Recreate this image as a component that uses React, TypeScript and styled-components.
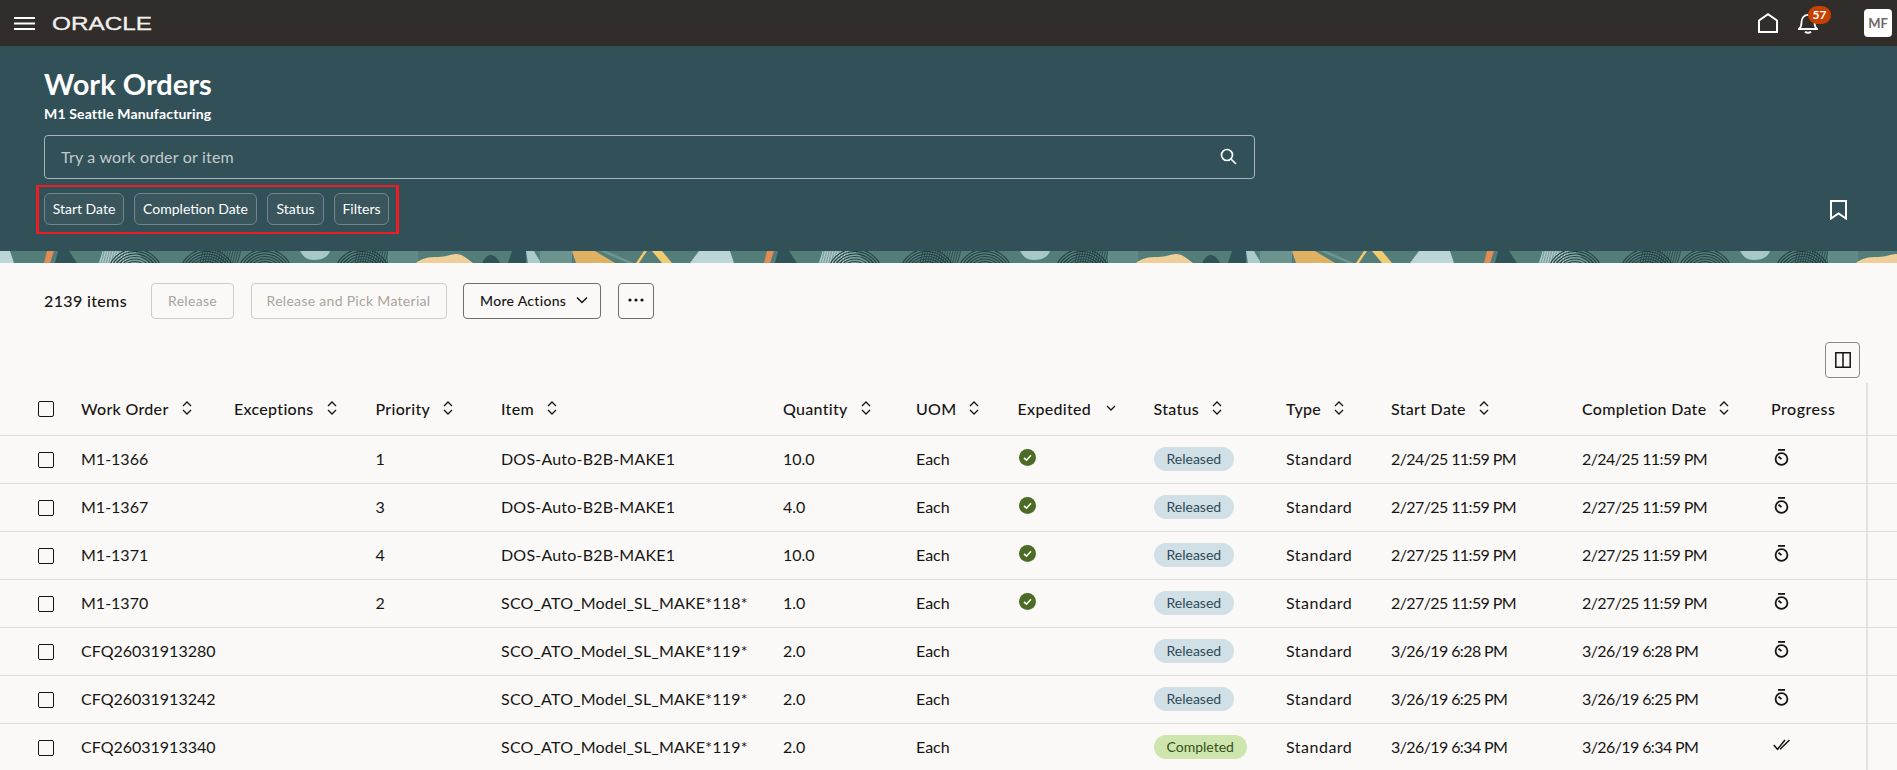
import React from 'react';
import styled, { createGlobalStyle } from 'styled-components';

const FONT = 'Lato, "Noto Sans", Arial, sans-serif';

const GlobalStyle = createGlobalStyle`
  html, body {
    margin: 0;
    height: 100%;
    overflow: hidden;
    background: #fbf9f8;
  }
  body {
    font-family: ${FONT};
    color: #161513;
  }
  * { box-sizing: border-box; }
`;

const GRID = '81px 153px 141.5px 125.5px 282px 133px 101.5px 136px 132.5px 105px 191px 189px 96px 1fr';

const TopBar = styled.header`
  height: 46px;
  background: #312d2a;
  display: flex;
  align-items: center;
  padding: 0 5px 0 14px;
`;

const TopActions = styled.div`
  margin-left: auto;
  display: flex;
  align-items: center;
`;

const IconSlot = styled.div`
  position: relative;
  display: flex;
  margin-right: ${(p: { $gap: number }) => p.$gap}px;
`;

const Badge = styled.span`
  position: absolute;
  left: 10px;
  top: -7px;
  width: 23px;
  height: 18px;
  border-radius: 9px;
  background: #c74100;
  color: #fff;
  font-size: 12px;
  font-weight: 700;
  line-height: 18px;
  text-align: center;
`;

const Avatar = styled.div`
  width: 28px;
  height: 28px;
  border-radius: 4px;
  background: #fff;
  color: #6f6a67;
  font-size: 13px;
  font-weight: 700;
  line-height: 28px;
  text-align: center;
`;

const Hero = styled.section`
  height: 205px;
  background: #325057;
  padding: 19px 50px 0 44px;
  color: #fff;
`;

const Title = styled.h1`
  margin: 0 0 1px;
  font-size: 29px;
  line-height: 38px;
  font-weight: 700;
`;

const Subtitle = styled.div`
  font-size: 14px;
  line-height: 20px;
  font-weight: 700;
  letter-spacing: 0.15px;
`;

const SearchBox = styled.div`
  width: 1211px;
  height: 44px;
  margin-top: 11px;
  padding: 0 17px 2px 16px;
  display: flex;
  align-items: center;
  justify-content: space-between;
  border: 1px solid #a5b5b8;
  border-radius: 4px;
  color: #c0cbcd;
  font-size: 16px;
  letter-spacing: 0.2px;
`;

const FilterRow = styled.div`
  display: flex;
  align-items: center;
  justify-content: space-between;
  margin-top: 6px;
`;

const FilterGroup = styled.div`
  display: flex;
  gap: 10px;
  margin-left: -8px;
  padding: 6px 7px 7px 5px;
  border: solid #ee1c25;
  border-width: 2px 3px;
`;

const Chip = styled.button<{ $width: number }>`
  width: ${(p) => p.$width}px;
  height: 32px;
  padding: 0 0 2px;
  border: 1px solid #6f878b;
  border-radius: 6px;
  background: #3a565c;
  color: #fff;
  font-family: ${FONT};
  font-size: 14px;
  white-space: nowrap;
`;

const BannerStrip = styled.svg`
  display: block;
  width: 100%;
  height: 12px;
`;

const Toolbar = styled.div`
  display: flex;
  align-items: center;
  height: 36px;
  margin-top: 20px;
  padding-left: 44px;
`;

const ItemCount = styled.div`
  width: 107px;
  padding-bottom: 2px;
  font-size: 16px;
  font-weight: 500;
  letter-spacing: 0.35px;
`;

const ActionButton = styled.button<{ $width: number; $disabled?: boolean }>`
  width: ${(p) => p.$width}px;
  height: 36px;
  margin-right: 16.5px;
  padding: 0 0 2px;
  display: flex;
  align-items: center;
  justify-content: center;
  border-radius: 4px;
  background: transparent;
  border: 1px solid ${(p) => (p.$disabled ? '#cfcbc8' : '#6f6c69')};
  color: ${(p) => (p.$disabled ? '#a8a4a0' : '#161513')};
  font-family: ${FONT};
  font-size: 14px;
  font-weight: ${(p) => (p.$disabled ? 400 : 500)};
  letter-spacing: 0.3px;
`;

const MenuButton = styled(ActionButton)`
  justify-content: flex-start;
  gap: 10px;
  padding-left: 16px;
`;

const TableTools = styled.div`
  display: flex;
  justify-content: flex-end;
  margin-top: 23px;
  padding-right: 37px;
`;

const SquareButton = styled.button`
  width: 35px;
  height: 36px;
  padding: 0;
  display: flex;
  align-items: center;
  justify-content: center;
  background: transparent;
  border: 1px solid #8b8885;
  border-radius: 4px;
`;

const Row = styled.div<{ $head?: boolean }>`
  display: grid;
  grid-template-columns: ${GRID};
  align-items: stretch;
  height: ${(p) => (p.$head ? 53 : 48)}px;
  margin-top: ${(p) => (p.$head ? 5 : 0)}px;
  border-bottom: 1px solid #dfdcd9;
`;

const Cell = styled.div<{ $head?: boolean; $track?: number }>`
  display: flex;
  align-items: center;
  gap: 13px;
  padding-bottom: 2px;
  font-size: 16px;
  font-weight: ${(p) => (p.$head ? 500 : 400)};
  letter-spacing: ${(p) => p.$track ?? (p.$head ? 0.3 : 0)}px;
  white-space: nowrap;
`;

const CheckCell = styled(Cell)`
  padding: 0 0 0 38px;
`;

const EndCell = styled(Cell)`
  margin-left: -1px;
  width: 2px;
  padding: 0;
  background: #e5e2df;
`;

const Checkbox = styled.span`
  width: 16px;
  height: 16px;
  border: 1px solid #161513;
  border-radius: 2px;
`;

const StatusPill = styled.span<{ $done: boolean }>`
  height: 24px;
  margin-top: 1px;
  padding: 0 13px;
  border-radius: 12px;
  background: ${(p) => (p.$done ? '#cfe5ae' : '#d1e0e7')};
  color: ${(p) => (p.$done ? '#34501a' : '#2f4a55')};
  font-size: 14px;
  line-height: 23px;
`;

const Menu = () => (
  <svg width="21" height="13" viewBox="0 0 21 13" fill="none" stroke="#fff" strokeWidth="2">
    <path d="M0 1h21M0 6.500h21M0 12h21" />
  </svg>
);

const Logo = () => (
  <svg width="100" height="18" viewBox="0 0 100 18" style={{ marginLeft: 17 }}>
    <text x="0" y="15.500" fontFamily='"Liberation Sans", Arial, sans-serif' fontSize="18" fill="#f2f0ee" stroke="#f2f0ee" strokeWidth="0.3" textLength="100" lengthAdjust="spacingAndGlyphs">ORACLE</text>
  </svg>
);

const HomeIcon = () => (
  <svg width="20" height="20" viewBox="0 0 20 20" fill="none" stroke="#fff" strokeWidth="2">
    <path d="M1 19V7.500L10 1.200l9 6.300V19z" />
  </svg>
);

const BellIcon = () => (
  <svg width="20" height="21" viewBox="0 0 20 21" fill="none" stroke="#fff" strokeWidth="1.800">
    <path d="M1 16c2-1.500 2.500-3 2.500-6.500C3.500 5 6 1.800 10 1.800s6.500 3.200 6.500 7.700c0 3.500.5 5 2.500 6.500z" />
    <path d="M7 18.800c1.500 1.300 4.500 1.300 6 0" />
  </svg>
);

const BookmarkIcon = () => (
  <svg width="17" height="20" viewBox="0 0 17 20" fill="none" stroke="#fff" strokeWidth="2">
    <path d="M1 1h15v17.500l-7.500-5-7.500 5z" />
  </svg>
);

const SearchIcon = () => (
  <svg width="17" height="17" viewBox="0 0 17 17" fill="none" stroke="#fff" strokeWidth="1.700">
    <circle cx="7" cy="7" r="5.500" />
    <path d="M11 11l5 5" />
  </svg>
);

const ChevronDown = () => (
  <svg width="12" height="8" viewBox="0 0 12 8" fill="none" stroke="#161513" strokeWidth="1.500">
    <path d="M1 1.500l5 5 5-5" />
  </svg>
);

const Dots = () => (
  <svg width="16" height="4" viewBox="0 0 16 4" fill="#161513">
    <circle cx="2" cy="2" r="1.600" />
    <circle cx="8" cy="2" r="1.600" />
    <circle cx="14" cy="2" r="1.600" />
  </svg>
);

const ColumnsIcon = () => (
  <svg width="16" height="16" viewBox="0 0 16 16" fill="none" stroke="#161513" strokeWidth="1.500">
    <path d="M.8.8h14.400v14.400H.8zM8 .8v14.400" />
  </svg>
);

const SortIcon = () => (
  <svg width="10" height="14" viewBox="0 0 10 14" fill="none" stroke="#161513" strokeWidth="1.300">
    <path d="M1 5l4-4 4 4M1 9l4 4 4-4" />
  </svg>
);

const SortedIcon = () => (
  <svg width="10" height="6" viewBox="0 0 10 6" fill="none" stroke="#161513" strokeWidth="1.300" style={{ marginLeft: 2 }}>
    <path d="M1 1l4 4 4-4" />
  </svg>
);

const CheckBadge = () => (
  <svg width="17" height="17" viewBox="0 0 17 17" style={{ marginTop: -2, marginLeft: 1 }}>
    <circle cx="8.500" cy="8.500" r="8.500" fill="#4c6b26" />
    <path d="M5 8.800l2.500 2.400L12 6.300" fill="none" stroke="#fff" strokeWidth="1.600" />
  </svg>
);

const Stopwatch = () => (
  <svg width="15" height="17" viewBox="0 0 15 17" fill="none" stroke="#161513" strokeWidth="1.800" style={{ marginLeft: 3, marginTop: -2 }}>
    <path d="M4 .9h7" />
    <circle cx="7.500" cy="10" r="5.900" />
    <path d="M7.500 10L4.500 7.700" />
  </svg>
);

const DoubleCheck = () => (
  <svg width="18" height="12" viewBox="0 0 18 12" fill="none" stroke="#161513" strokeWidth="1.500" style={{ marginTop: -3, marginLeft: 2 }}>
    <path d="M.7 6l3.800 4.300L12 1M7 10.300L16.500 1" />
  </svg>
);

const Whorl = ({ cx }: { cx: number }) => (
  <g fill="none" stroke="#223d43" strokeWidth="1.100">
    {[8, 10.500, 13, 15.500, 18, 20.500, 23, 25.500, 28].map((r) => <circle key={r} cx={cx} cy={26} r={r} />)}
  </g>
);

const HatchLines = ({ from, to, color }: { from: number; to: number; color: string }) => {
  const lines: number[] = [];
  for (let x = from; x < to; x += 2.500) lines.push(x);
  return (
    <g stroke={color} strokeWidth="0.8">
      {lines.map((x) => <path key={x} d={`M${x + 3} 0L${x} 12`} />)}
    </g>
  );
};

const Banner = () => (
  <BannerStrip>
    <defs>
      <pattern id="wo-banner" patternUnits="userSpaceOnUse" width="720" height="12">
        <rect width="720" height="12" fill="#527d78" />
        <path d="M-21 0h31l4 12h-44zM699 0h31l4 12h-44z" fill="#bcd6d7" />
        <path d="M47 0h7l-4 12h-6z" fill="#e28c56" />
        <path d="M58 0h11l8 12H55z" fill="#2f5258" />
        <path d="M104 0h30l15 12H98z" fill="#7ea6a2" />
        <HatchLines from={100} to={126} color="#c7dddb" />
        <Whorl cx={135} />
        <Whorl cx={207} />
        <Whorl cx={265} />
        <HatchLines from={200} to={240} color="#223d43" />
        <path d="M300 0h30c-2 6-8 9-16 9s-11-4-14-9z" fill="#a6c9c8" />
        <Whorl cx={362} />
        <HatchLines from={355} to={388} color="#223d43" />
        <path d="M388 0h30v12h-30z" fill="#5f8a85" />
        <path d="M416 12c6-5 12-6 22-6 8 0 13-3 18-3 6 0 12 5 17 9z" fill="#eecf9a" />
        <path d="M482 12c3-6 6-8 9-8 4 0 7 4 9 8z" fill="#2f5258" />
        <path d="M512 0h14v12h-18z" fill="#2f5258" />
        <path d="M526 0h8l7 12h-13z" fill="#a9cccb" />
        <path d="M540 0h32v12h-32z" fill="#6b948f" />
        <path d="M572 0h23l20 12h-39z" fill="#e0b063" />
        <path d="M600 0l28 12h6L606 0z" fill="#6f9792" />
        <path d="M644 0h3l-8 12h-3z" fill="#f0cb6f" />
        <path d="M652 0h10l10 12h-10z" fill="#f0cb6f" />
      </pattern>
    </defs>
    <rect width="100%" height="12" fill="url(#wo-banner)" />
  </BannerStrip>
);

interface IWorkOrder {
  id: string;
  priority: string;
  item: string;
  quantity: string;
  expedited: boolean;
  status: string;
  start: string;
}

const ORDERS: IWorkOrder[] = [
  { id: 'M1-1366', priority: '1', item: 'DOS-Auto-B2B-MAKE1', quantity: '10.0', expedited: true, status: 'Released', start: '2/24/25 11:59 PM' },
  { id: 'M1-1367', priority: '3', item: 'DOS-Auto-B2B-MAKE1', quantity: '4.0', expedited: true, status: 'Released', start: '2/27/25 11:59 PM' },
  { id: 'M1-1371', priority: '4', item: 'DOS-Auto-B2B-MAKE1', quantity: '10.0', expedited: true, status: 'Released', start: '2/27/25 11:59 PM' },
  { id: 'M1-1370', priority: '2', item: 'SCO_ATO_Model_SL_MAKE*118*', quantity: '1.0', expedited: true, status: 'Released', start: '2/27/25 11:59 PM' },
  { id: 'CFQ26031913280', priority: '', item: 'SCO_ATO_Model_SL_MAKE*119*', quantity: '2.0', expedited: false, status: 'Released', start: '3/26/19 6:28 PM' },
  { id: 'CFQ26031913242', priority: '', item: 'SCO_ATO_Model_SL_MAKE*119*', quantity: '2.0', expedited: false, status: 'Released', start: '3/26/19 6:25 PM' },
  { id: 'CFQ26031913340', priority: '', item: 'SCO_ATO_Model_SL_MAKE*119*', quantity: '2.0', expedited: false, status: 'Completed', start: '3/26/19 6:34 PM' },
];

const COLUMNS = ['Work Order', 'Exceptions', 'Priority', 'Item', 'Quantity', 'UOM', 'Expedited', 'Status', 'Type', 'Start Date', 'Completion Date'];

const App: React.FC = () => (
  <>
    <GlobalStyle />
    <TopBar>
      <Menu />
      <Logo />
      <TopActions>
        <IconSlot $gap={20}><HomeIcon /></IconSlot>
        <IconSlot $gap={46}>
          <BellIcon />
          <Badge>57</Badge>
        </IconSlot>
        <Avatar>MF</Avatar>
      </TopActions>
    </TopBar>
    <Hero>
      <Title>Work Orders</Title>
      <Subtitle>M1 Seattle Manufacturing</Subtitle>
      <SearchBox>
        Try a work order or item
        <SearchIcon />
      </SearchBox>
      <FilterRow>
        <FilterGroup>
          <Chip $width={80}>Start Date</Chip>
          <Chip $width={123}>Completion Date</Chip>
          <Chip $width={57}>Status</Chip>
          <Chip $width={55}>Filters</Chip>
        </FilterGroup>
        <BookmarkIcon />
      </FilterRow>
    </Hero>
    <Banner />
    <Toolbar>
      <ItemCount>2139 items</ItemCount>
      <ActionButton $width={83} $disabled>Release</ActionButton>
      <ActionButton $width={196} $disabled>Release and Pick Material</ActionButton>
      <MenuButton $width={138}>More Actions<ChevronDown /></MenuButton>
      <ActionButton $width={36}><Dots /></ActionButton>
    </Toolbar>
    <TableTools>
      <SquareButton><ColumnsIcon /></SquareButton>
    </TableTools>
    <Row $head>
      <CheckCell><Checkbox /></CheckCell>
      {COLUMNS.map((name) => (
        <Cell $head key={name}>
          {name}
          {name === 'Expedited' ? <SortedIcon /> : <SortIcon />}
        </Cell>
      ))}
      <Cell $head $track={0.5}>Progress</Cell>
      <EndCell />
    </Row>
    {ORDERS.map((order) => (
      <Row key={order.id}>
        <CheckCell><Checkbox /></CheckCell>
        <Cell>{order.id}</Cell>
        <Cell />
        <Cell>{order.priority}</Cell>
        <Cell $track={0.2}>{order.item}</Cell>
        <Cell>{order.quantity}</Cell>
        <Cell>Each</Cell>
        <Cell>{order.expedited && <CheckBadge />}</Cell>
        <Cell><StatusPill $done={order.status === 'Completed'}>{order.status}</StatusPill></Cell>
        <Cell $track={0.5}>Standard</Cell>
        <Cell $track={-0.6}>{order.start}</Cell>
        <Cell $track={-0.6}>{order.start}</Cell>
        <Cell>{order.status === 'Completed' ? <DoubleCheck /> : <Stopwatch />}</Cell>
        <EndCell />
      </Row>
    ))}
  </>
);

export default App;
